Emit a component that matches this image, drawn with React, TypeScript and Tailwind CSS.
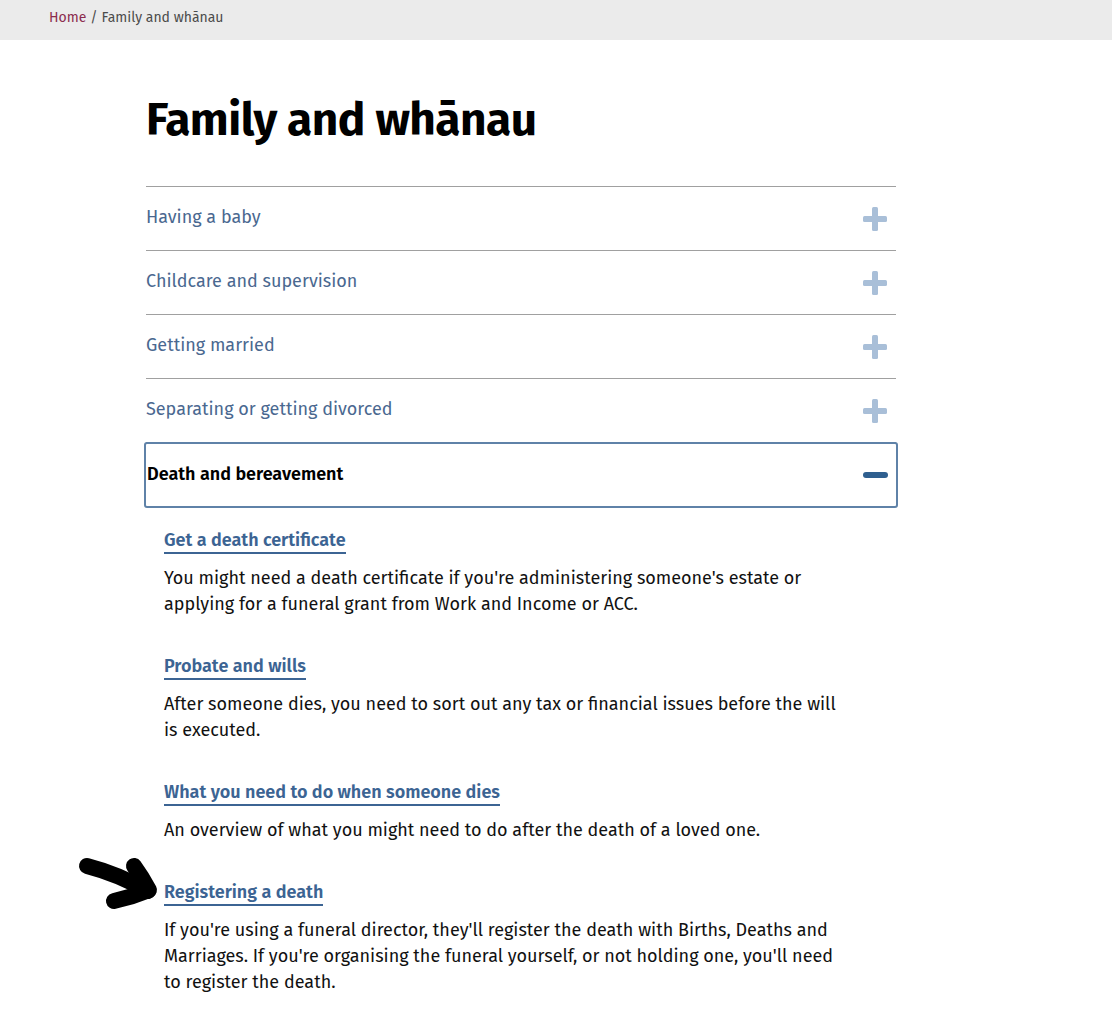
import { useState } from "react";

const sections = [
  "Having a baby",
  "Childcare and supervision",
  "Getting married",
  "Separating or getting divorced",
];

const items = [
  {
    title: "Get a death certificate",
    desc: "You might need a death certificate if you're administering someone's estate or applying for a funeral grant from Work and Income or ACC.",
  },
  {
    title: "Probate and wills",
    desc: "After someone dies, you need to sort out any tax or financial issues before the will is executed.",
  },
  {
    title: "What you need to do when someone dies",
    desc: "An overview of what you might need to do after the death of a loved one.",
  },
  {
    title: "Registering a death",
    desc: "If you're using a funeral director, they'll register the death with Births, Deaths and Marriages. If you're organising the funeral yourself, or not holding one, you'll need to register the death.",
    arrow: true,
  },
];

function Plus() {
  return (
    <svg width="24" height="24" viewBox="0 0 24 24" className="shrink-0">
      <rect x="9" y="0" width="6" height="24" rx="1.5" fill="#a9bfd8" />
      <rect x="0" y="9" width="24" height="6" rx="1.5" fill="#a9bfd8" />
    </svg>
  );
}

function Arrow() {
  return (
    <svg
      width="90"
      height="64"
      viewBox="0 0 90 64"
      className="absolute left-[-88px] top-[-27px]"
    >
      <path
        d="M11 14 Q42 22 72 39"
        stroke="#000"
        strokeWidth="16"
        strokeLinecap="round"
        fill="none"
      />
      <path
        d="M58 14 Q66 25 73 38 Q56 45 38 49"
        stroke="#000"
        strokeWidth="16"
        strokeLinecap="round"
        strokeLinejoin="round"
        fill="none"
      />
    </svg>
  );
}

export default function App() {
  const [open, setOpen] = useState(true);

  return (
    <div className="min-h-screen bg-white font-['Fira_Sans','Noto_Sans',sans-serif] text-black">
      {/* BREADCRUMB */}
      <div className="h-10 bg-[#ebebeb] pl-[49px] flex items-start pt-[7px] text-[14px] text-[#4b4b4b]">
        <a className="text-[#8b2c4e]">Home</a>
        <span className="mx-[4px]">/</span>
        <span>Family and whānau</span>
      </div>

      <main className="ml-[146px] w-[750px]">
        <h1 className="mt-[52px] mb-[38px] text-[46px] font-bold leading-[56px] tracking-[-0.5px]">
          Family and whānau
        </h1>

        <div className="border-t border-[#a0a0a0]">
          {sections.map((s) => (
            <div
              key={s}
              className="h-16 border-b border-[#a0a0a0] flex items-center justify-between pr-[9px]"
            >
              <span className="text-[18px] text-[#4a6890] -mt-[2px]">{s}</span>
              <Plus />
            </div>
          ))}
        </div>

        <button
          onClick={() => setOpen(!open)}
          className="-ml-[2px] mt-[-1px] w-[754px] h-[66px] border-2 border-[#5f82a8] rounded-[3px] flex items-center justify-between pl-[1px] pr-[8px] text-left"
        >
          <span className="text-[18px] font-semibold text-black -mt-[2px]">
            Death and bereavement
          </span>
          <span className="w-[25px] h-[6px] rounded-[3px] bg-[#2f5f8f]" />
        </button>

        <div className={open ? "pl-[18px] pt-[19px] w-[706px]" : "hidden"}>
          {items.map((it) => (
            <div key={it.title} className="mb-[36px] relative">
              <div className="relative inline-block">
                {it.arrow && <Arrow />}
                <a className="text-[18px] font-semibold text-[#3c6493] border-b-2 border-[#3c6493] leading-[26px] pb-[1px]">
                  {it.title}
                </a>
              </div>
              <p className="mt-[12px] text-[18px] leading-[26px] text-[#111]">
                {it.desc}
              </p>
            </div>
          ))}
        </div>
      </main>
    </div>
  );
}
